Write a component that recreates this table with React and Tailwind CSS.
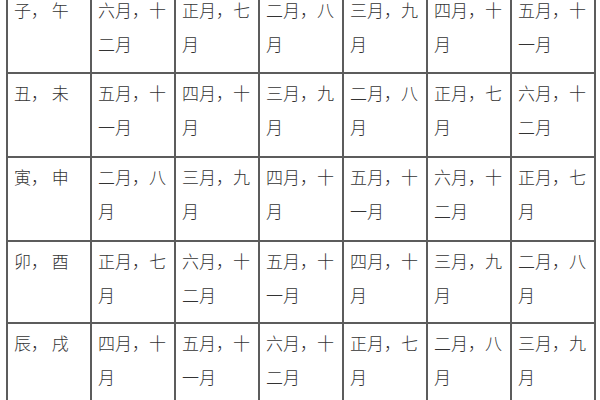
import React from "react";

const rows = [
  { h: "h-[83px]", cells: ["子， 午", "六月，十二月", "正月，七月", "二月，八月", "三月，九月", "四月，十月", "五月，十一月"] },
  { h: "h-[84px]", cells: ["丑， 未", "五月，十一月", "四月，十月", "三月，九月", "二月，八月", "正月，七月", "六月，十二月"] },
  { h: "h-[84px]", cells: ["寅， 申", "二月，八月", "三月，九月", "四月，十月", "五月，十一月", "六月，十二月", "正月，七月"] },
  { h: "h-[82px]", cells: ["卯， 酉", "正月，七月", "六月，十二月", "五月，十一月", "四月，十月", "三月，九月", "二月，八月"] },
  { h: "h-[84px]", cells: ["辰， 戌", "四月，十月", "五月，十一月", "六月，十二月", "正月，七月", "二月，八月", "三月，九月"] },
];

export default function App() {
  return (
    <div className="w-[600px] h-[400px] overflow-hidden bg-white">
      <table
        className="-mt-[11px] ml-[6px] border-collapse table-fixed text-[17px] leading-[34px] font-light text-[#333333]"
        style={{ fontFamily: '"Noto Sans CJK SC", "Noto Sans", sans-serif' }}
      >
        <tbody>
          {rows.map((row, i) => (
            <tr key={i} className={row.h}>
              {row.cells.map((c, j) => (
                <td
                  key={j}
                  className="w-[84px] border-2 border-[#5c5c5c] align-top pt-[2px] pl-[6px] pr-[2px] break-all"
                >
                  {c}
                </td>
              ))}
            </tr>
          ))}
        </tbody>
      </table>
    </div>
  );
}
